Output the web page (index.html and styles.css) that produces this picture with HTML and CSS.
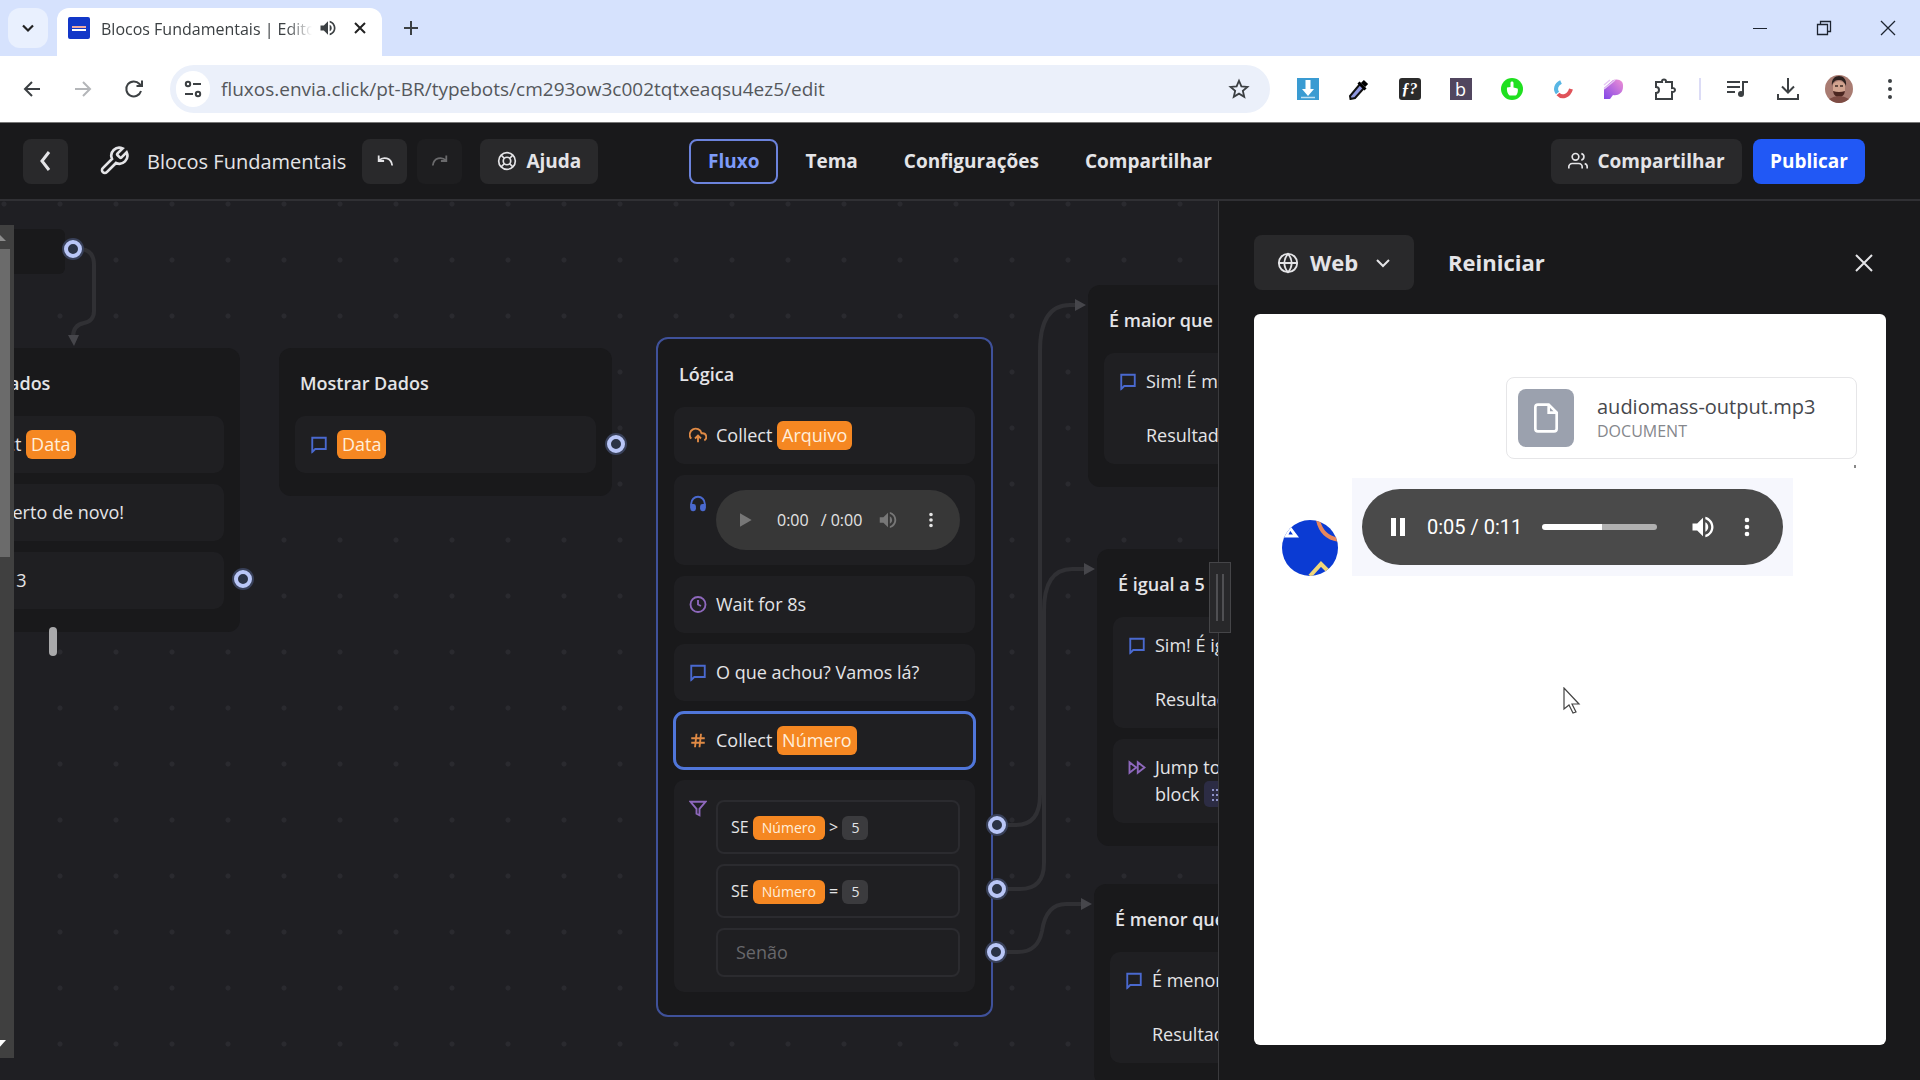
FILE: index.html
```html
<!DOCTYPE html>
<html lang="pt-BR">
<head>
<meta charset="utf-8">
<title>Blocos Fundamentais | Editor</title>
<link rel="stylesheet" href="styles.css">
</head>
<body>
<svg class="defs" aria-hidden="true">
  <symbol id="i-chat" viewBox="0 0 24 24"><path d="M21 3H3v19l4-4h14z"/></symbol>
  <symbol id="i-volume" viewBox="0 0 24 24"><path fill="currentColor" stroke="none" d="M3 9v6h4l5 5V4L7 9H3zm13.500 3A4.500 4.500 0 0 0 14 7.970v8.050c1.480-.73 2.500-2.250 2.500-4.020zM14 3.230v2.060c2.890.86 5 3.540 5 6.710s-2.110 5.850-5 6.710v2.060c4.010-.91 7-4.490 7-8.770s-2.990-7.860-7-8.770z"/></symbol>
  <symbol id="i-kebab" viewBox="0 0 24 24"><path fill="currentColor" stroke="none" d="M12 8a2 2 0 1 0 0-4 2 2 0 0 0 0 4zm0 2a2 2 0 1 0 0 4 2 2 0 0 0 0-4zm0 6a2 2 0 1 0 0 4 2 2 0 0 0 0-4z"/></symbol>
</svg>

<header class="browser">
  <div class="tabstrip">
    <button class="tab-search" aria-label="Pesquisar guias"><svg class="ic16" viewBox="0 0 16 16"><path d="M3 5.500l5 5 5-5" stroke-width="2.200"/></svg></button>
    <div class="tab">
      <span class="favicon"><i></i><i></i></span>
      <span class="tab-title">Blocos Fundamentais | Editor</span>
      <svg class="ic20" viewBox="0 0 24 24"><use href="#i-volume"/></svg>
      <button class="plain tab-close" aria-label="Fechar guia"><svg class="ic16" viewBox="0 0 16 16"><path d="M3 3l10 10M13 3L3 13" stroke-width="2"/></svg></button>
    </div>
    <button class="plain new-tab" aria-label="Nova guia"><svg class="ic16" viewBox="0 0 16 16"><path d="M8 1v14M1 8h14" stroke-width="2"/></svg></button>
    <div class="window-controls">
      <button class="plain" aria-label="Minimizar"><svg class="ic16" viewBox="0 0 16 16"><path d="M1 8.500h14" stroke-width="1"/></svg></button>
      <button class="plain" aria-label="Restaurar"><svg class="ic16" viewBox="0 0 16 16"><path d="M1.500 4.500h10v10h-10zM4.500 4V1.500h10v10H12" stroke-width="1.300"/></svg></button>
      <button class="plain" aria-label="Fechar"><svg class="ic16" viewBox="0 0 16 16"><path d="M1 1l14 14M15 1L1 15" stroke-width="1.300"/></svg></button>
    </div>
  </div>
  <div class="toolbar">
    <button class="plain tool" aria-label="Voltar"><svg class="ic20" viewBox="0 0 20 20"><path d="M18 10H3M10 3l-7 7 7 7" stroke-width="2"/></svg></button>
    <button class="plain tool faint" aria-label="Avançar"><svg class="ic20" viewBox="0 0 20 20"><path d="M2 10h15M10 3l7 7-7 7" stroke-width="2"/></svg></button>
    <button class="plain tool" aria-label="Recarregar"><svg class="ic20" viewBox="0 0 20 20"><path d="M17 12A7.500 7.500 0 1 1 15.500 5L18 7M18 1.500V7h-5.500" stroke-width="2"/></svg></button>
    <div class="omnibox">
      <span class="site-info"><svg class="ic20" viewBox="0 0 20 20"><circle cx="5" cy="5" r="2.200"/><path d="M10 5h8M2 15h8"/><circle cx="15" cy="15" r="2.200"/></svg></span>
      <input class="url" type="text" aria-label="Endereço" value="fluxos.envia.click/pt-BR/typebots/cm293ow3c002tqtxeaqsu4ez5/edit">
      <button class="plain star" aria-label="Favoritar"><svg class="ic22" viewBox="0 0 24 24"><path stroke-width="2" d="M12 3l2.600 6.100 6.600.6-5 4.300 1.500 6.500-5.700-3.400-5.700 3.400L7.800 14l-5-4.300 6.600-.6z"/></svg></button>
    </div>
    <div class="extensions">
      <button class="plain tool" aria-label="Baixar vídeos"><svg class="ic22" viewBox="0 0 22 22"><path fill="#3a9bd2" stroke="none" d="M0 0h22v22H0z"/><path fill="#fff" stroke="none" d="M8.500 2h5v9H17l-6 7-6-7h3.500z"/><path stroke="#bfe0f3" stroke-width="1.500" d="M4 19.500h14"/></svg></button>
      <button class="plain tool" aria-label="Conta-gotas"><svg class="ic22" viewBox="0 0 22 22"><path fill="#8f98e0" stroke="#111" stroke-width="2" d="M12 6l4 4-9 10-4.500 1-.5-3z"/><path stroke="#000" stroke-width="6" d="M15 7l3-3"/><path stroke="#000" stroke-width="3" d="M10.500 4.500l7 7"/></svg></button>
      <button class="plain tool" aria-label="Identificar fonte"><span class="ext-font">ƒ?</span></button>
      <button class="plain tool" aria-label="Extensão b"><span class="ext-b">b</span></button>
      <button class="plain tool" aria-label="Curtir"><svg class="ic22" viewBox="0 0 22 22"><circle cx="11" cy="11" r="11" fill="#1fe01f" stroke="none"/><path fill="#fff" stroke="none" d="M9.500 9V5c0-2 3-2 3 0v4.500l4 1c1 1 0 7-2 7H8.500C6.500 16 5.500 12 6 9.500z"/></svg></button>
      <button class="plain tool" aria-label="Espiral"><svg class="ic22" viewBox="0 0 22 22"><path stroke="#58b6e4" stroke-width="4" d="M9 4C3.500 6.500 3 12 5.500 15"/><path stroke="#e0535a" stroke-width="4" d="M6 16c4 4.500 11 2 13-5"/></svg></button>
      <button class="plain tool" aria-label="Extensão P"><svg class="ic22" viewBox="0 0 22 22"><defs><linearGradient id="pg" x1="0" y1="1" x2="1" y2="0"><stop offset="0" stop-color="#8247e8"/><stop offset="1" stop-color="#f091d4"/></linearGradient></defs><path fill="url(#pg)" stroke="none" d="M1 21V10L10 2c6-2 11 1 10 7 0 6-5 9-10 8l-3 4z"/><path stroke="#e6c8f4" stroke-width="1.500" d="M1 7l6-5M1 11L12 2"/></svg></button>
      <button class="plain tool" aria-label="Extensões"><svg class="ic24" viewBox="0 0 24 24"><path stroke-width="2" d="M3 5h6c-.5-3.500 4.500-3.500 4 0h6v6c4-.5 4 4.500 0 4v7H3v-6c4 0 4-6 0-6z"/></svg></button>
    </div>
    <span class="tool-sep"></span>
    <button class="plain tool" aria-label="Mídia"><svg class="ic24" viewBox="0 0 24 24"><path d="M2 5h13M2 10h13M2 15h8M18 17V5h5" stroke-width="2"/><circle cx="16" cy="17" r="3" fill="currentColor" stroke="none"/></svg></button>
    <button class="plain tool" aria-label="Downloads"><svg class="ic24" viewBox="0 0 24 24"><path d="M12 1v14M6 9.500l6 6 6-6M2 17v5h20v-5" stroke-width="2"/></svg></button>
    <button class="plain tool" aria-label="Perfil"><svg class="ic28" viewBox="0 0 28 28"><circle cx="14" cy="14" r="14" fill="#a97c72" stroke="none"/><path fill="#d2a490" stroke="none" d="M8 9q6-6 12 0v7q-6 8-12 0z"/><path fill="#2d211f" stroke="none" d="M7 11C6 4 10 1 14 1s8 3 7 10c-2-5-4-6-7-6s-6 1-7 6z"/><path fill="#4b2620" stroke="none" d="M8 16q6 2 12 0-1 6-6 6t-6-6z"/><path fill="#7d4c44" stroke="none" d="M4 24q10-6 20 0-10 8-20 0z"/><path stroke="#3d2a25" stroke-width="1.500" d="M10 11h3M15 11h3"/></svg></button>
    <button class="plain tool" aria-label="Menu"><svg class="ic24" viewBox="0 0 24 24"><g fill="currentColor" stroke="none"><circle cx="12" cy="4" r="2"/><circle cx="12" cy="12" r="2"/><circle cx="12" cy="20" r="2"/></g></svg></button>
  </div>
</header>

<div class="app-bar">
  <div class="bar-left">
    <button class="btn square" aria-label="Voltar"><svg class="ic24" viewBox="0 0 24 24"><path d="M15 3l-7 9 7 9" stroke-width="3"/></svg></button>
    <svg class="wrench" viewBox="0 0 24 24"><path d="M14.700 6.300a1 1 0 0 0 0 1.400l1.600 1.600a1 1 0 0 0 1.400 0l3.770-3.770a6 6 0 0 1-7.940 7.940l-6.910 6.910a2.120 2.120 0 0 1-3-3l6.910-6.910a6 6 0 0 1 7.940-7.940l-3.760 3.760z"/></svg>
    <h1 class="bot-name">Blocos Fundamentais</h1>
    <button class="btn square undo" aria-label="Desfazer"><svg class="ic18" viewBox="0 0 20 20"><path d="M3 4v6h6M3 9.500C8 5 17 6 18 15" stroke-width="2"/></svg></button>
    <button class="btn square dim" aria-label="Refazer"><svg class="ic18" viewBox="0 0 20 20"><path d="M17 4v6h-6M17 9.500C12 5 3 6 2 15" stroke-width="2"/></svg></button>
    <button class="btn help"><svg class="ic20" viewBox="0 0 24 24"><circle cx="12" cy="12" r="10"/><circle cx="12" cy="12" r="4.500"/><path d="M5 5l4 4M15 15l4 4M15 9l4-4M5 19l4-4"/></svg>Ajuda</button>
  </div>
  <nav class="bar-nav">
    <a class="nav-link current" href="#fluxo">Fluxo</a>
    <a class="nav-link" href="#tema">Tema</a>
    <a class="nav-link" href="#config">Configurações</a>
    <a class="nav-link" href="#share">Compartilhar</a>
  </nav>
  <div class="bar-right">
    <button class="btn share"><svg class="ic20" viewBox="0 0 24 24"><path d="M17 21v-2a4 4 0 0 0-4-4H5a4 4 0 0 0-4 4v2M23 21v-2a4 4 0 0 0-3-3.900M16 3.100a4 4 0 0 1 0 7.800"/><circle cx="9" cy="7" r="4"/></svg>Compartilhar</button>
    <button class="btn publish">Publicar</button>
  </div>
</div>

<main class="workspace">
  <section class="canvas" id="fluxo" aria-label="Fluxo">
    <svg class="edges" aria-hidden="true">
      <path d="M82 48Q94 50 94 64V110Q94 120 84 122Q73 124 73 136"/>
      <path d="M1006 624H1016Q1040 624 1040 594V150Q1040 104 1070 104H1076"/>
      <path d="M1006 688H1020Q1044 688 1044 662V410Q1044 368 1072 368H1086"/>
      <path d="M1005 751H1018Q1038 751 1042 730Q1046 703 1066 703H1082"/>
      <g class="heads"><path d="M68 134h11l-5 11z"/><path d="M1075 98v12l11-6z"/><path d="M1084 362v12l11-6z"/><path d="M1081 697v12l11-6z"/></g>
    </svg>

    <article class="node n-start"></article>

    <article class="node n-collect">
      <h2>Coletar Dados</h2>
      <div class="block"><svg class="bi" viewBox="0 0 24 24"></svg><p>Collect <span class="chip">Data</span></p></div>
      <div class="block"><svg class="bi" viewBox="0 0 24 24"></svg><p>Deu certo de novo!</p></div>
      <div class="block"><svg class="bi" viewBox="0 0 24 24"></svg><p>Bloco 3</p></div>
    </article>

    <article class="node n-show">
      <h2>Mostrar Dados</h2>
      <div class="block"><svg class="bi blue" viewBox="0 0 24 24"><use href="#i-chat"/></svg><p><span class="chip">Data</span></p></div>
    </article>

    <article class="node n-logic active">
      <h2>Lógica</h2>
      <div class="block"><svg class="bi orange" viewBox="0 0 24 24"><path d="M16 16l-4-4-4 4M12 12v9M20.400 18.400A5 5 0 0 0 18 9h-1.300A8 8 0 1 0 3 16.300"/></svg><p>Collect <span class="chip">Arquivo</span></p></div>
      <div class="block"><svg class="bi blue" viewBox="0 0 24 24"><path d="M3 18v-6a9 9 0 0 1 18 0v6"/><path fill="currentColor" d="M21 19a2 2 0 0 1-2 2h-1a2 2 0 0 1-2-2v-3a2 2 0 0 1 2-2h3zM3 19a2 2 0 0 0 2 2h1a2 2 0 0 0 2-2v-3a2 2 0 0 0-2-2H3z"/></svg>
        <div class="player small">
          <button class="plain off" aria-label="Reproduzir"><svg class="ic20" viewBox="0 0 24 24"><path fill="currentColor" stroke="none" d="M6 4v16l14-8z"/></svg></button>
          <span class="time"><span>0:00</span><span>/ 0:00</span></span>
          <button class="plain off" aria-label="Som"><svg class="ic22" viewBox="0 0 24 24"><use href="#i-volume"/></svg></button>
          <button class="plain more" aria-label="Mais opções"><svg class="ic22" viewBox="0 0 24 24"><use href="#i-kebab"/></svg></button>
        </div>
      </div>
      <div class="block"><svg class="bi purple" viewBox="0 0 24 24"><circle cx="12" cy="12" r="10"/><path d="M12 6v6l4 2"/></svg><p>Wait for 8s</p></div>
      <div class="block"><svg class="bi blue" viewBox="0 0 24 24"><use href="#i-chat"/></svg><p>O que achou? Vamos lá?</p></div>
      <div class="block selected"><svg class="bi orange" viewBox="0 0 24 24"><path d="M3 9h18M3 15h18M10 3L8 21M16 3l-2 18"/></svg><p>Collect <span class="chip">Número</span></p></div>
      <div class="block"><svg class="bi purple" viewBox="0 0 24 24"><path d="M22 3H2l8 9.500V19l4 2v-8.500z"/></svg>
        <div class="conditions">
          <div class="cond">SE <span class="chip sm">Número</span> &gt; <span class="value">5</span></div>
          <div class="cond">SE <span class="chip sm">Número</span> = <span class="value">5</span></div>
          <div class="cond else">Senão</div>
        </div>
      </div>
    </article>

    <article class="node n-greater">
      <h2>É maior que 5</h2>
      <div class="block"><svg class="bi blue" viewBox="0 0 24 24"><use href="#i-chat"/></svg><p>Sim! É maior<br><br>Resultado</p></div>
    </article>

    <article class="node n-equal">
      <h2>É igual a 5</h2>
      <div class="block"><svg class="bi blue" viewBox="0 0 24 24"><use href="#i-chat"/></svg><p>Sim! É igual<br><br>Resultado</p></div>
      <div class="block"><svg class="bi purple" viewBox="0 0 24 24"><path d="M13 19l9-7-9-7zM2 19l9-7-9-7z"/></svg><p>Jump to<br>block <span class="ref"><svg class="ic16" viewBox="0 0 16 16"><path d="M2 3h2M2 8h2M2 13h2M6 3h9M6 8h9M6 13h9"/></svg></span></p></div>
    </article>

    <article class="node n-less">
      <h2>É menor que 5</h2>
      <div class="block"><svg class="bi blue" viewBox="0 0 24 24"><use href="#i-chat"/></svg><p>É menor que<br><br>Resultado</p></div>
    </article>

    <i class="port p-start"></i><i class="port p-collect"></i><i class="port p-show"></i>
    <i class="port p-gt"></i><i class="port p-eq"></i><i class="port p-else"></i>
    <i class="drag-mark"></i>

    <div class="scroller" aria-hidden="true">
      <svg class="arrow" viewBox="0 0 14 24"><path fill="#8c8c8c" stroke="none" d="M-8 16L-1 9l7 7z"/></svg>
      <span class="thumb"></span>
      <svg class="arrow" viewBox="0 0 14 24"><path fill="#fff" stroke="none" d="M-8 6H6l-7 8z"/></svg>
    </div>
  </section>

  <aside class="preview" aria-label="Pré-visualização">
    <span class="resizer"><i></i><i></i></span>
    <div class="preview-bar">
      <button class="btn runtime"><svg class="ic22" viewBox="0 0 24 24"><circle cx="12" cy="12" r="10"/><path d="M2 12h20M12 2a15.300 15.300 0 0 1 4 10 15.300 15.300 0 0 1-4 10 15.300 15.300 0 0 1-4-10 15.300 15.300 0 0 1 4-10z"/></svg>Web<svg class="ic16" viewBox="0 0 16 16"><path d="M2 5l6 6 6-6" stroke-width="2"/></svg></button>
      <button class="btn restart">Reiniciar</button>
      <button class="plain close" aria-label="Fechar"><svg class="ic20" viewBox="0 0 20 20"><path d="M2 2l16 16M18 2L2 18" stroke-width="2"/></svg></button>
    </div>
    <div class="chat">
      <div class="file-card">
        <span class="file-icon"><svg class="ic32" viewBox="0 0 24 24"><path d="M14 2H6a2 2 0 0 0-2 2v16a2 2 0 0 0 2 2h12a2 2 0 0 0 2-2V8zM14 2v6h6"/></svg></span>
        <span class="file-text"><span class="file-name">audiomass-output.mp3</span><span class="file-kind">DOCUMENT</span></span>
        <i class="tick"></i>
      </div>
      <div class="reply">
        <svg class="avatar" viewBox="0 0 56 56"><defs><clipPath id="av"><circle cx="28" cy="28" r="28"/></clipPath></defs><g clip-path="url(#av)"><path fill="#0b3bd3" stroke="none" d="M0 0h56v56H0z"/><path stroke="#fff" stroke-width="3" d="M4 16L8 8l6 8z"/><path stroke="#e8875c" stroke-width="4" d="M36 0q4 18 22 20"/><path stroke="#f0d67a" stroke-width="4" d="M28 56l11-12 9 9"/></g></svg>
        <div class="bubble">
          <div class="player">
            <button class="plain" aria-label="Pausar"><svg class="ic24" viewBox="0 0 24 24"><path fill="currentColor" stroke="none" d="M5 3h5v18H5zM14 3h5v18h-5z"/></svg></button>
            <span class="time">0:05 / 0:11</span>
            <input class="seek" type="range" min="0" max="100" value="52" aria-label="Posição">
            <button class="plain" aria-label="Som"><svg class="ic28" viewBox="0 0 24 24"><use href="#i-volume"/></svg></button>
            <button class="plain" aria-label="Mais opções"><svg class="ic28" viewBox="0 0 24 24"><use href="#i-kebab"/></svg></button>
          </div>
        </div>
      </div>
      <svg class="pointer" viewBox="0 0 18 28" aria-hidden="true"><path fill="#fff" stroke="#444" stroke-width="1.200" d="M1 1v21l5-4 4 8 3-1-4-8h7z"/></svg>
    </div>
  </aside>
</main>
</body>
</html>
```
FILE: styles.css
```css
* { box-sizing: border-box; }
html, body { height: 100%; }
body {
  margin: 0;
  display: flex;
  flex-direction: column;
  overflow: hidden;
  background: #1f1f23;
  color: #e4e4e7;
  font: 18px/27px "Open Sans", "Noto Sans", sans-serif;
}
h1, h2, p { margin: 0; font: inherit; }
svg { flex: none; fill: none; stroke: currentColor; stroke-width: 2; }
.defs { position: absolute; width: 0; height: 0; }
.ic16 { width: 16px; height: 16px; }
.ic18 { width: 18px; height: 18px; }
.ic20 { width: 20px; height: 20px; }
.ic22 { width: 22px; height: 22px; }
.ic24 { width: 24px; height: 24px; }
.ic28 { width: 28px; height: 28px; }
.ic32 { width: 32px; height: 32px; }
button, input { font: inherit; color: inherit; }
button {
  display: flex;
  align-items: center;
  justify-content: center;
  padding: 0;
  border: 0;
}
.plain { background: none; }

/* browser window */
.browser { flex: none; background: #fff; color: #3c4043; border-bottom: 1px solid #777; }
.tabstrip {
  display: flex;
  height: 56px;
  padding: 8px 0 0 8px;
  background: #d6e2fd;
}
.tab-search {
  width: 40px;
  height: 40px;
  border-radius: 12px;
  background: #e9f0fe;
  color: #222;
}
.tab {
  display: flex;
  align-items: center;
  width: 325px;
  margin-left: 9px;
  padding: 0 10px 8px 11px;
  border-radius: 12px 12px 0 0;
  background: #fff;
}
.favicon {
  display: flex;
  flex: none;
  flex-direction: column;
  justify-content: center;
  align-items: center;
  gap: 1px;
  width: 22px;
  height: 22px;
  border-radius: 2px;
  background: #1237c8;
}
.favicon i { width: 14px; height: 2px; background: #f0a9a0; }
.favicon i + i { background: #fff; }
.tab-title {
  flex: 1;
  margin: 2px 6px 0 11px;
  overflow: hidden;
  white-space: nowrap;
  font-size: 16px;
  mask-image: linear-gradient(90deg, #000 88%, transparent);
}
.tab-close { width: 24px; height: 24px; margin-left: 10px; color: #222; }
.new-tab { width: 40px; height: 40px; margin-left: 9px; }
.window-controls { display: flex; margin-left: auto; }
.window-controls button { width: 64px; height: 40px; color: #1d2430; }
.toolbar {
  display: flex;
  align-items: center;
  height: 66px;
  padding: 0 5px 0 6px;
}
.tool { flex: none; width: 51px; height: 40px; }
.faint { color: #b4b6b9; }
.omnibox {
  display: flex;
  flex: 1;
  align-items: center;
  min-width: 0;
  height: 48px;
  margin: 0 12px 0 11px;
  padding: 0 20px 0 6px;
  border-radius: 24px;
  background: #ebf0fa;
}
.site-info {
  display: flex;
  flex: none;
  align-items: center;
  justify-content: center;
  width: 34px;
  height: 36px;
  border-radius: 18px;
  background: #fff;
}
.url {
  flex: 1;
  min-width: 0;
  margin-left: 11px;
  padding: 0;
  border: 0;
  background: none;
  color: #55585c;
  font-size: 19px;
}
.extensions { display: flex; }
.ext-font, .ext-b {
  width: 22px;
  height: 22px;
  background: #2b2b2b;
  color: #fff;
  border-radius: 3px;
  font: italic 700 16px/22px "Liberation Serif", serif;
}
.ext-b { background: #51465f; border-radius: 0; font: 18px/22px "Open Sans", sans-serif; }
.tool-sep { flex: none; width: 2px; height: 22px; margin: 0 10px 0 9px; background: #dcdcf6; }

/* application header */
.app-bar {
  display: grid;
  flex: none;
  grid-template-columns: 1fr auto 1fr;
  align-items: center;
  height: 78px;
  padding: 0 23px;
  background: #19191b;
  border-bottom: 2px solid #303034;
}
.bar-left, .bar-nav, .bar-right { display: flex; align-items: center; }
.bar-nav { gap: 8px; }
.bar-right { justify-content: flex-end; gap: 11px; padding-right: 32px; }
.btn {
  height: 45px;
  gap: 9px;
  border-radius: 8px;
  background: #29292b;
  font-size: 19px;
  font-weight: 700;
}
.square { width: 45px; }
.wrench { width: 32px; height: 32px; margin: 0 17px 0 30px; }
.bot-name { white-space: nowrap; font-size: 20px; }
.undo { margin: 0 10px 0 16px; }
.dim { margin-right: 18px; background: #1e1e20; color: #6a6a6c; }
.help { width: 118px; }
.nav-link {
  height: 45px;
  padding: 0 17px;
  border: 2px solid transparent;
  border-radius: 8px;
  color: inherit;
  font-size: 19px;
  font-weight: 700;
  line-height: 40px;
  text-decoration: none;
}
.current { border-color: #6c83dc; color: #7d9bf8; }
.share { width: 191px; }
.publish { width: 112px; background: #2158f5; color: #fff; }

.workspace {
  display: grid;
  flex: 1;
  grid-template-columns: minmax(0, 1218fr) minmax(0, 702fr);
  min-height: 0;
}

/* flow canvas */
.canvas {
  position: relative;
  overflow: hidden;
  background: radial-gradient(circle, #2a2a2f 2px, transparent 3px) 32px 31px / 56px 56px #1f1f23;
}
.edges { position: absolute; inset: 0; width: 100%; height: 100%; color: #303034; stroke-width: 4; }
.edges .heads { fill: #46464b; stroke: none; }
.node {
  position: absolute;
  display: flex;
  flex-direction: column;
  gap: 11px;
  width: 333px;
  padding: 22px 16px 23px;
  border-radius: 12px;
  background: #19191b;
  font-weight: 500;
}
.node h2 { margin-bottom: 9px; padding-left: 5px; font-weight: 600; line-height: 26px; white-space: nowrap; }
.block {
  display: flex;
  gap: 9px;
  padding: 15px;
  border-radius: 10px;
  background: #1f1f22;
  white-space: nowrap;
}
.bi { width: 18px; height: 27px; stroke-width: 2.500; }
.blue { color: #4a69cf; }
.orange { color: #e08a45; }
.purple { color: #8e68bd; }
.active { width: 337px; border: 2px solid #3f519a; }
.selected { outline: 3px solid #5076da; outline-offset: -2px; }
.chip {
  display: inline-block;
  padding: 0 5px;
  border-radius: 6px;
  background: #f58722;
  color: #ffeeda;
  line-height: 29px;
  margin: -1px 0;
}
.player {
  display: flex;
  flex: 1;
  align-items: center;
  min-width: 0;
  height: 76px;
  padding: 0 24px;
  border-radius: 38px;
  background: #4a4a4a;
  color: #fff;
}
.small { height: 60px; padding: 0 18px 0 19px; border-radius: 30px; background: #373737; color: #e4e4e4; font-size: 16px; }
.small .time { display: flex; gap: 12px; margin: 0 15px 0 22px; }
.off { color: #777; }
.more { margin-left: auto; }
.conditions { display: flex; flex: 1; flex-direction: column; gap: 10px; margin-top: 5px; }
.cond {
  height: 54px;
  padding: 0 13px;
  border: 2px solid #2b2b2f;
  border-radius: 8px;
  font-size: 16px;
  line-height: 50px;
}
.chip.sm { margin: 0; padding: 0 9px; font-size: 14px; line-height: 24px; }
.value {
  display: inline-block;
  padding: 0 9px;
  border-radius: 6px;
  background: #3b3b3e;
  font-size: 14px;
  line-height: 24px;
}
.else { height: 49px; padding: 0 18px; color: #68686c; font-size: 18px; font-weight: 400; line-height: 45px; }
.ref { display: inline-block; padding: 0 6px; border-radius: 5px; background: #2c2c44; color: #8d92c8; line-height: 26px; }
.ref svg { vertical-align: -2px; }
.n-start { left: -268px; top: 28px; height: 44px; border-radius: 6px; }
.n-collect { left: -93px; top: 147px; }
.n-show { left: 279px; top: 147px; }
.n-logic { left: 656px; top: 136px; }
.n-greater { left: 1088px; top: 84px; }
.n-equal { left: 1097px; top: 348px; }
.n-less { left: 1094px; top: 683px; }
.port {
  position: absolute;
  width: 18px;
  height: 18px;
  border: 4px solid #b9c6f7;
  border-radius: 50%;
  background: #2b3346;
  box-shadow: 0 0 0 2px #39415a;
}
.p-start { left: 64px; top: 39px; }
.p-collect { left: 234px; top: 369px; }
.p-show { left: 607px; top: 234px; }
.p-gt { left: 988px; top: 615px; }
.p-eq { left: 988px; top: 679px; }
.p-else { left: 987px; top: 742px; }
.drag-mark { position: absolute; left: 49px; top: 426px; width: 8px; height: 29px; border-radius: 4px; background: #a9a9ab; }
.scroller {
  position: absolute;
  inset: 24px auto 22px 0;
  display: flex;
  flex-direction: column;
  width: 14px;
  background: #404040;
}
.scroller .arrow { width: 14px; height: 24px; }
.thumb { width: 10px; height: 37%; margin-bottom: auto; background: #6b6b6b; }

/* preview panel */
.preview {
  position: relative;
  display: flex;
  flex-direction: column;
  gap: 24px;
  padding: 34px 34px 35px 35px;
  border-left: 1px solid #3a3a3d;
  background: #19191b;
}
.resizer {
  position: absolute;
  left: -10px;
  top: 361px;
  display: flex;
  justify-content: center;
  gap: 4px;
  width: 22px;
  height: 71px;
  padding: 11px 0;
  border: 1px solid #454548;
  background: #28282a;
}
.resizer i { width: 2px; background: #505053; }
.preview-bar { display: flex; align-items: center; }
.runtime { width: 160px; height: 55px; gap: 11px; font-size: 22px; }
.runtime .ic16 { margin-left: 6px; }
.restart { height: 55px; margin-left: 34px; background: none; font-size: 22px; }
.close { width: 40px; height: 40px; margin: 0 2px 0 auto; }
.chat {
  position: relative;
  display: flex;
  flex: 1;
  flex-direction: column;
  gap: 19px;
  padding: 63px 29px 0 28px;
  border-radius: 6px;
  background: #fff;
}
.file-card {
  position: relative;
  display: flex;
  align-self: flex-end;
  gap: 23px;
  width: 351px;
  padding: 11px;
  border: 1px solid #e6e6e8;
  border-radius: 8px;
}
.file-icon {
  display: flex;
  align-items: center;
  justify-content: center;
  width: 56px;
  height: 58px;
  border-radius: 8px;
  background: #9ba1ae;
  color: #fff;
}
.file-text { display: flex; flex-direction: column; padding-top: 4px; color: #46484d; }
.file-name { font-size: 20px; line-height: 27px; }
.file-kind { font-size: 16px; line-height: 22px; color: #85878c; }
.tick { position: absolute; right: 0; bottom: -10px; width: 2px; height: 3px; background: #888; }
.reply { display: flex; align-items: flex-end; gap: 14px; }
.avatar { width: 56px; height: 56px; }
.bubble { display: flex; width: 441px; padding: 11px 10px; background: #f6f7fd; }
.bubble .time { margin: 0 20px 0 17px; font: 20px/27px Roboto, "Open Sans", sans-serif; white-space: nowrap; }
.seek {
  flex: 1;
  width: 60px;
  min-width: 0;
  height: 6px;
  margin: 0 32px 0 0;
  border-radius: 3px;
  appearance: none;
  background: linear-gradient(90deg, #fff 52%, #b0b0b0 52%);
}
.seek::-webkit-slider-thumb { appearance: none; width: 0; height: 0; }
.bubble .plain + .plain { margin-left: 16px; }
.bubble .plain:last-child { margin-right: -2px; }
.pointer { position: absolute; left: 309px; top: 373px; width: 18px; height: 28px; }
```
